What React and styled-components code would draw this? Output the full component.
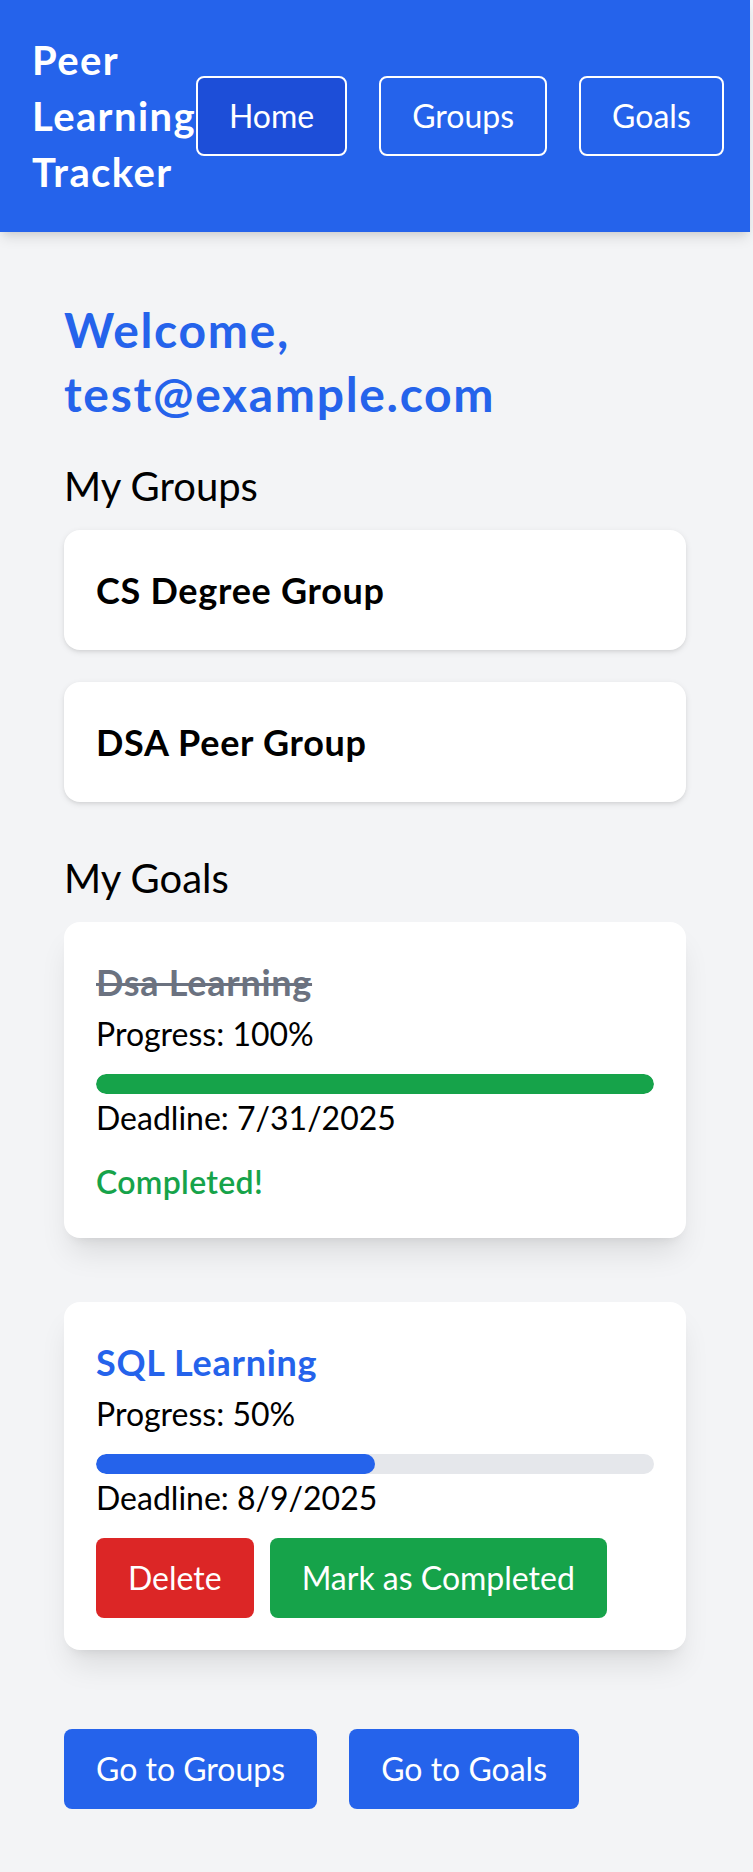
import React from "react";
import styled, { createGlobalStyle } from "styled-components";

const GlobalStyle = createGlobalStyle`
  *, *::before, *::after { box-sizing: border-box; }
  html, body { margin: 0; padding: 0; }
  body {
    background: #f3f4f6;
    font-family: "Lato", "Open Sans", "Noto Sans", sans-serif;
    color: #000;
    font-size: 32px;
    line-height: 48px;
  }
`;

const Page = styled.div`
  width: 750px;
  min-height: 1872px;
  background: #f3f4f6;
`;

const Header = styled.header`
  display: flex;
  justify-content: space-between;
  align-items: center;
  padding: 32px;
  background: #2563eb;
  color: #fff;
  box-shadow: 0 8px 12px -2px rgba(0, 0, 0, 0.1), 0 4px 8px -4px rgba(0, 0, 0, 0.1);
  position: relative;
  z-index: 1;
`;

const Brand = styled.h1`
  margin: 0;
  font-size: 40px;
  line-height: 56px;
  font-weight: 700;
  letter-spacing: 0.035em;
`;

const Nav = styled.nav`
  display: flex;
  gap: 32px;
  flex-shrink: 0;
`;

const NavButton = styled.button`
  font-family: inherit;
  font-size: 32px;
  line-height: 48px;
  padding: 14px 31px;
  border: 2px solid #fff;
  border-radius: 8px;
  color: #fff;
  background: ${(p) => (p.$active ? "#1d4ed8" : "transparent")};
  cursor: pointer;
`;

const Main = styled.main`
  padding: 66px 64px 64px;
`;

const Welcome = styled.h2`
  margin: 0 0 32px;
  font-size: 48px;
  line-height: 64px;
  font-weight: 700;
  letter-spacing: 0.035em;
  color: #2563eb;
`;

const Email = styled.span`
  display: block;
`;

const SectionTitle = styled.h3`
  margin: 0 0 16px;
  font-size: 40px;
  line-height: 56px;
  font-weight: 400;
`;

const Section = styled.section`
  margin-bottom: ${(p) => p.$mb}px;
`;

const List = styled.div`
  display: flex;
  flex-direction: column;
  gap: ${(p) => p.$gap}px;
`;

const GroupCard = styled.div`
  background: #fff;
  border-radius: 16px;
  padding: 32px;
  box-shadow: 0 2px 6px rgba(0, 0, 0, 0.1), 0 2px 4px -2px rgba(0, 0, 0, 0.1);
`;

const CardTitle = styled.div`
  font-size: 36px;
  line-height: 56px;
  font-weight: 700;
  letter-spacing: 0.02em;
  color: ${(p) => p.$color || "#000"};
  text-decoration: ${(p) => (p.$done ? "line-through" : "none")};
  text-decoration-thickness: 3px;
`;

const GoalCard = styled.div`
  background: #fff;
  border-radius: 16px;
  padding: 32px;
  box-shadow: 0 20px 30px -6px rgba(0, 0, 0, 0.1), 0 8px 12px -8px rgba(0, 0, 0, 0.1);
`;

const Text = styled.div`
  font-size: 32px;
  line-height: 48px;
`;

const Track = styled.div`
  margin-top: 16px;
  height: 20px;
  border-radius: 9999px;
  background: #e5e7eb;
  overflow: hidden;
`;

const Fill = styled.div`
  height: 100%;
  border-radius: 9999px;
  background: ${(p) => p.$color};
`;

const Completed = styled.div`
  margin-top: 16px;
  font-size: 32px;
  line-height: 48px;
  font-weight: 600;
  color: #16a34a;
  letter-spacing: 0.01em;
`;

const Actions = styled.div`
  display: flex;
  gap: ${(p) => p.$gap}px;
  margin-top: ${(p) => p.$mt}px;
`;

const Button = styled.button`
  font-family: inherit;
  font-size: 32px;
  line-height: 48px;
  padding: 16px 32px;
  border: none;
  border-radius: 8px;
  color: #fff;
  background: ${(p) => p.$bg};
  cursor: pointer;
`;

const goals = [
  { title: "Dsa Learning", progress: 100, deadline: "7/31/2025", done: true },
  { title: "SQL Learning", progress: 50, deadline: "8/9/2025", done: false },
];

export default function App() {
  return (
    <>
      <GlobalStyle />
      <Page>
        <Header>
          <Brand>Peer Learning Tracker</Brand>
          <Nav>
            <NavButton $active>Home</NavButton>
            <NavButton>Groups</NavButton>
            <NavButton>Goals</NavButton>
          </Nav>
        </Header>
        <Main>
          <Welcome>
            Welcome, <Email>test@example.com</Email>
          </Welcome>

          <Section $mb={48}>
            <SectionTitle>My Groups</SectionTitle>
            <List $gap={32}>
              <GroupCard>
                <CardTitle>CS Degree Group</CardTitle>
              </GroupCard>
              <GroupCard>
                <CardTitle>DSA Peer Group</CardTitle>
              </GroupCard>
            </List>
          </Section>

          <Section $mb={0}>
            <SectionTitle>My Goals</SectionTitle>
            <List $gap={64}>
              {goals.map((g) => (
                <GoalCard key={g.title}>
                  <CardTitle $done={g.done} $color={g.done ? "#6b7280" : "#2563eb"}>
                    {g.title}
                  </CardTitle>
                  <Text>Progress: {g.progress}%</Text>
                  <Track>
                    <Fill
                      $color={g.done ? "#16a34a" : "#2563eb"}
                      style={{ width: `${g.progress}%` }}
                    />
                  </Track>
                  <Text>Deadline: {g.deadline}</Text>
                  {g.done ? (
                    <Completed>Completed!</Completed>
                  ) : (
                    <Actions $gap={16} $mt={16}>
                      <Button $bg="#dc2626">Delete</Button>
                      <Button $bg="#16a34a">Mark as Completed</Button>
                    </Actions>
                  )}
                </GoalCard>
              ))}
            </List>
          </Section>

          <Actions $gap={32} $mt={79}>
            <Button $bg="#2563eb">Go to Groups</Button>
            <Button $bg="#2563eb">Go to Goals</Button>
          </Actions>
        </Main>
      </Page>
    </>
  );
}
